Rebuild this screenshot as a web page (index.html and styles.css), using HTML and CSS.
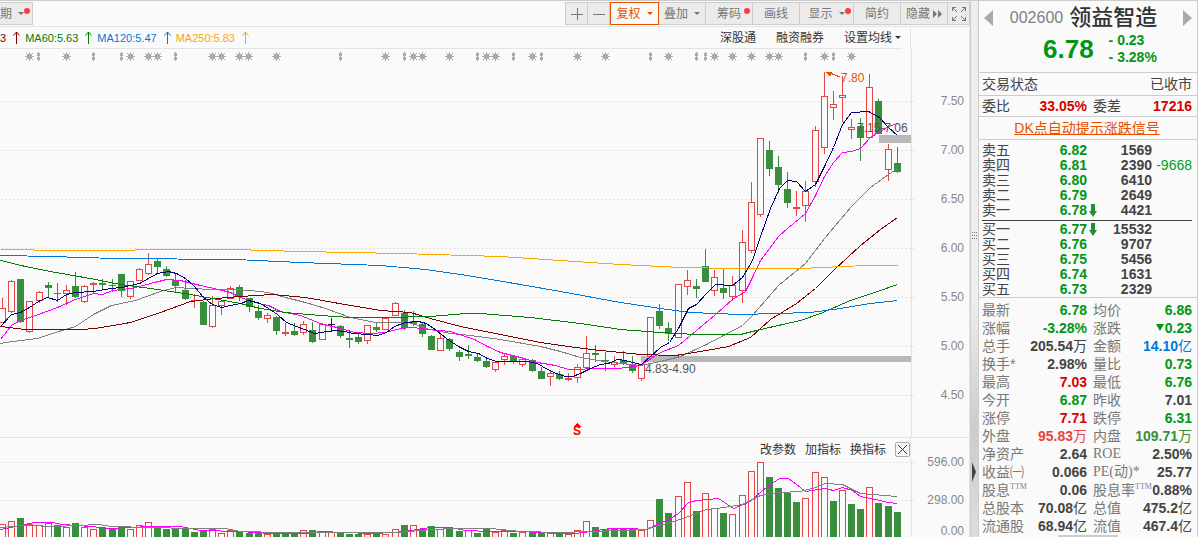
FILE: index.html
```html
<!DOCTYPE html>
<html lang="zh-CN">
<head>
<meta charset="utf-8">
<title>领益智造 002600</title>
<link rel="stylesheet" href="styles.css">
</head>
<body>
<div class="app">
  <main class="main">
    <header class="toolbar">
      <button class="tool tool-period" type="button">期<i class="caret"></i><i class="dot"></i></button>
      <div class="tools">
        <button class="tool tool-icon" type="button" aria-label="放大"><svg width="12" height="12" viewBox="0 0 12 12"><path d="M0 6.5H12M6.5 0V12"/></svg></button>
        <button class="tool tool-icon" type="button" aria-label="缩小"><svg width="12" height="12" viewBox="0 0 12 12"><path d="M0 6.5H12"/></svg></button>
        <button class="tool tool-wide active" type="button">复权<i class="caret"></i></button>
        <button class="tool" type="button">叠加<i class="caret"></i></button>
        <button class="tool" type="button">筹码<i class="dot"></i></button>
        <button class="tool" type="button">画线</button>
        <button class="tool tool-wider" type="button">显示<i class="caret"></i><i class="dot"></i></button>
        <button class="tool" type="button">简约</button>
        <button class="tool" type="button">隐藏<svg class="ffwd" width="9" height="8" viewBox="0 0 9 8"><path d="M0 0L4 4L0 8ZM5 0L9 4L5 8Z"/></svg></button>
        <button class="tool tool-icon" type="button" aria-label="全屏"><svg width="14" height="14" viewBox="0 0 14 14"><path d="M.5 4V.5H4M.5 .5L5 5M10 .5H13.5V4M13.5 .5L9 5M.5 10V13.5H4M.5 13.5L5 9M10 13.5H13.5V10M13.5 13.5L9 9"/></svg></button>
      </div>
    </header>
    <div class="row-with-axis">
      <div class="ma-row">
        <span class="ma ma30">3<svg class="up" width="7" height="13" viewBox="0 0 7 13"><path d="M3.5 13V1M.5 4.5L3.5 1L6.5 4.5"/></svg></span>
        <span class="ma ma60">MA60:5.63<svg class="up" width="7" height="13" viewBox="0 0 7 13"><path d="M3.5 13V1M.5 4.5L3.5 1L6.5 4.5"/></svg></span>
        <span class="ma ma120">MA120:5.47<svg class="up" width="7" height="13" viewBox="0 0 7 13"><path d="M3.5 13V1M.5 4.5L3.5 1L6.5 4.5"/></svg></span>
        <span class="ma ma250">MA250:5.83<svg class="up" width="7" height="13" viewBox="0 0 7 13"><path d="M3.5 13V1M.5 4.5L3.5 1L6.5 4.5"/></svg></span>
        <div class="chart-links">
          <button class="plain" type="button">深股通</button>
          <button class="plain" type="button">融资融券</button>
          <button class="plain" type="button">设置均线<i class="caret"></i></button>
        </div>
      </div>
    </div>
    <svg class="chart" id="price" viewBox="0 48 970 389"></svg>
    <div class="row-with-axis volume-head">
      <div class="volume-row">
        <button class="plain" type="button">改参数</button>
        <button class="plain" type="button">加指标</button>
        <button class="plain" type="button">换指标</button>
        <button class="close" type="button" aria-label="关闭"><svg width="9" height="9" viewBox="0 0 9 9"><path d="M0 0L9 9M9 0L0 9"/></svg></button>
      </div>
    </div>
    <svg class="chart" id="volume" viewBox="0 460 970 77"></svg>
  </main>

  <div class="splitter">
    <svg class="grip" width="6" height="10" viewBox="0 0 6 10"><path d="M0 1.500H6M0 4.500H6M0 7.500H6" stroke-dasharray="1 1"/></svg>
    <svg class="fold" width="4" height="20" viewBox="0 0 4 20"><path d="M0 0L4 10L0 20Z"/></svg>
  </div>

  <aside class="side">
    <section class="quote">
      <div class="name-row">
        <button class="nav" type="button" aria-label="上一只"><svg width="9" height="16" viewBox="0 0 9 16"><path d="M9 0L0 8L9 16Z"/></svg></button>
        <h1 class="stock"><span class="code">002600</span>领益智造</h1>
        <button class="nav" type="button" aria-label="下一只"><svg width="9" height="16" viewBox="0 0 9 16"><path d="M0 0L9 8L0 16Z"/></svg></button>
      </div>
      <div class="price-row">
        <strong class="price">6.78</strong>
        <div class="change"><span>- 0.23</span><span>- 3.28%</span></div>
      </div>
    </section>
    <section class="line state"><span>交易状态</span><span>已收市</span></section>
    <section class="line ratio">
      <span>委比</span><b class="red">33.05%</b><span class="second">委差</span><b class="red">17216</b>
    </section>
    <section class="line dk"><a href="#dk">DK点自动提示涨跌信号</a></section>
    <section class="book">
      <table class="orders">
        <colgroup><col class="o-name"><col class="o-price"><col class="o-arrow"><col class="o-vol"><col></colgroup>
        <tbody>
          <tr><th>卖五</th><td class="green">6.82</td><td></td><td>1569</td><td></td></tr>
          <tr><th>卖四</th><td class="green">6.81</td><td></td><td>2390</td><td class="delta">-9668</td></tr>
          <tr><th>卖三</th><td class="green">6.80</td><td></td><td>6410</td><td></td></tr>
          <tr><th>卖二</th><td class="green">6.79</td><td></td><td>2649</td><td></td></tr>
          <tr><th>卖一</th><td class="green">6.78</td><td><svg class="drop" width="8" height="13" viewBox="0 0 8 13"><path d="M2 0H6V7H8L4 13L0 7H2Z"/></svg></td><td>4421</td><td></td></tr>
        </tbody>
      </table>
      <table class="orders buy">
        <colgroup><col class="o-name"><col class="o-price"><col class="o-arrow"><col class="o-vol"><col></colgroup>
        <tbody>
          <tr><th>买一</th><td class="green">6.77</td><td><svg class="drop" width="8" height="13" viewBox="0 0 8 13"><path d="M2 0H6V7H8L4 13L0 7H2Z"/></svg></td><td>15532</td><td></td></tr>
          <tr><th>买二</th><td class="green">6.76</td><td></td><td>9707</td><td></td></tr>
          <tr><th>买三</th><td class="green">6.75</td><td></td><td>5456</td><td></td></tr>
          <tr><th>买四</th><td class="green">6.74</td><td></td><td>1631</td><td></td></tr>
          <tr><th>买五</th><td class="green">6.73</td><td></td><td>2329</td><td></td></tr>
        </tbody>
      </table>
    </section>
    <section class="figures">
      <table class="stats">
        <colgroup><col class="s-name"><col class="s-value"><col class="s-name2"><col></colgroup>
        <tbody>
          <tr><th>最新</th><td class="green">6.78</td><th>均价</th><td class="green">6.86</td></tr>
          <tr><th>涨幅</th><td class="green">-3.28%</td><th>涨跌</th><td class="green"><i class="fall"></i>0.23</td></tr>
          <tr><th>总手</th><td>205.54<span>万</span></td><th>金额</th><td class="blue">14.10<span>亿</span></td></tr>
          <tr><th>换手*</th><td>2.98%</td><th>量比</th><td class="green">0.73</td></tr>
          <tr><th>最高</th><td class="red">7.03</td><th>最低</th><td class="green">6.76</td></tr>
          <tr><th>今开</th><td class="green">6.87</td><th>昨收</th><td>7.01</td></tr>
          <tr><th>涨停</th><td class="red">7.71</td><th>跌停</th><td class="green">6.31</td></tr>
          <tr><th>外盘</th><td class="soft-red">95.83<span>万</span></td><th>内盘</th><td class="soft-green">109.71<span>万</span></td></tr>
          <tr><th>净资产</th><td>2.64</th><th class="latin">ROE</th><td>2.50%</td></tr>
          <tr><th>收益㈠</th><td>0.066</td><th class="latin">PE(动)*</th><td>25.77</td></tr>
          <tr><th>股息<sup>TTM</sup></th><td>0.06</td><th>股息率<sup>TTM</sup></th><td>0.88%</td></tr>
          <tr><th>总股本</th><td>70.08<span>亿</span></td><th>总值</th><td>475.2<span>亿</span></td></tr>
          <tr><th>流通股</th><td>68.94<span>亿</span></td><th>流值</th><td>467.4<span>亿</span></td></tr>
        </tbody>
      </table>
    </section>
    <div class="scroll-hint"></div>
  </aside>
</div>
<script src="chart.js"></script>
</body>
</html>
```
FILE: styles.css
```css
* { box-sizing: border-box; }
body {
  margin: 0;
  background: #fafafa;
  color: #444;
  font: 12px/16px "Liberation Sans", "Noto Sans CJK SC", sans-serif;
  overflow: hidden;
}
button {
  font: inherit;
  color: inherit;
  border: 0;
  padding: 0;
  background: none;
  white-space: nowrap;
}
svg { display: block; }
path { fill: none; stroke: currentColor; }
.app { display: flex; height: 100vh; border-top: 1px solid #ccc; }
.main { flex: 1; min-width: 0; }

.toolbar {
  display: flex;
  justify-content: space-between;
  height: 26px;
  padding: 1px 0 1px;
  border-bottom: 1px solid #e4e4e4;
  color: #777;
}
.tools { display: flex; border-left: 1px solid #ccc; }
.tool {
  position: relative;
  display: flex;
  align-items: center;
  justify-content: center;
  width: 47px;
  height: 23px;
  background: #ebebeb;
  border: 1px solid #ccc;
  border-left: 0;
}
.tool-icon { width: 22px; }
.tool-wide { width: 49px; }
.tool-wider { width: 54px; }
.tool-period { width: 33px; justify-content: flex-start; padding-right: 10px; }
.tool.active {
  color: #e65000;
  background: #fafafa;
  border: 1px solid #e65000;
}
.caret {
  margin-left: 6px;
  border: 3px solid transparent;
  border-top-color: currentColor;
  border-bottom: 0;
}
.dot {
  position: absolute;
  top: 5px;
  right: 2px;
  width: 6px;
  height: 6px;
  border-radius: 50%;
  background: #ff3c3c;
}
.ffwd { margin-left: 3px; }
.ffwd path { fill: currentColor; stroke: none; }

.row-with-axis { padding-right: 58px; border-right: 1px solid #e4e4e4; }
.ma-row {
  display: flex;
  align-items: center;
  gap: 5px;
  height: 21px;
  padding-right: 9px;
  border-right: 1px solid #e4e4e4;
}
.ma { display: flex; align-items: center; gap: 7px; font-size: 11px; }
.ma30 { color: #800000; }
.ma60 { color: #008000; }
.ma120 { color: #0078d7; }
.ma250 { color: #ffa500; }
.chart-links { display: flex; gap: 20px; margin-left: auto; color: #333; }
.plain { display: flex; align-items: center; }
.plain .caret { margin-left: 3px; }
.volume-head { border-top: 1px solid #e4e4e4; }
.volume-row {
  display: flex;
  align-items: center;
  justify-content: flex-end;
  gap: 9px;
  height: 23px;
  border-right: 1px solid #e4e4e4;
  color: #333;
}
.close {
  display: flex;
  align-items: center;
  justify-content: center;
  width: 15px;
  height: 15px;
  border: 1px solid #aaa;
  border-radius: 2px;
}

.chart { width: 100%; height: auto; overflow: visible; shape-rendering: crispEdges; }
.chart text { font-size: 12px; fill: #555; }
.chart .axis { fill: #888; text-anchor: end; }
.chart .peak { fill: #e65000; }
.chart .signal { fill: #f00; font-weight: bold; text-anchor: middle; }
.chart .frame { stroke: #e4e4e4; }
.chart .grid { stroke: #ccc; stroke-dasharray: 1 3; }
.chart .gap { fill: #b8b8b8; }
.chart .up { stroke: #e54545; fill: #fafafa; }
.chart .down { stroke: #388e3c; fill: #388e3c; }
.chart .flat { stroke: #222; fill: #222; }
.chart .mark { stroke: #aaa; fill: #aaa; }
.chart .curve { fill: none; }
.chart .navy { stroke: #000080; }
.chart .magenta { stroke: #f0f; }
.chart .gray { stroke: #808080; }
.chart .maroon { stroke: #800000; }
.chart .forest { stroke: #008000; }
.chart .azure { stroke: #0078d7; }
.chart .amber { stroke: #ffa500; }
.chart .pointer { stroke: #e65000; fill: #e65000; }
.chart .tip { fill: #f00; stroke: none; }

.splitter {
  display: flex;
  flex-direction: column;
  justify-content: space-between;
  width: 8px;
  padding: 230px 1px 55px;
  border-left: 1px solid #ccc;
  background: linear-gradient(#eee 55%, #ccc 80%, #ddd);
}
.grip { color: #777; }
.fold path { fill: #444; stroke: none; }

.side {
  display: flex;
  flex-direction: column;
  width: 220px;
  border: 1px solid #ccc;
  border-top: 0;
  border-bottom: 0;
  font-size: 14px;
}
.quote { height: 72px; padding: 3px 5px 0; }
.name-row { display: flex; align-items: center; justify-content: space-between; height: 28px; }
.nav path { fill: #aaa; stroke: none; }
.stock { display: flex; align-items: center; gap: 6px; margin: 0; padding-right: 9px; font-size: 22px; line-height: 28px; font-weight: 500; color: #333; }
.code { font-size: 16px; font-weight: normal; color: #808080; }
.price-row { display: flex; align-items: center; gap: 15px; padding-left: 59px; color: #009614; }
.price { font-size: 26px; line-height: 34px; }
.change { display: flex; flex-direction: column; font-weight: bold; line-height: 17px; white-space: pre; }
.line {
  display: flex;
  align-items: center;
  height: 23px;
  padding: 0 5px 0 3px;
  border-top: 1px solid #ccc;
}
.state { justify-content: space-between; }
.ratio { display: grid; grid-template-columns: 28px 77px 34px 1fr; height: 22px; }
.ratio b { text-align: right; }
.ratio .second { padding-left: 6px; }
.dk { justify-content: center; }
.dk a { color: #e65000; }
.book { padding: 3px 5px 0 3px; border-top: 1px solid #ccc; }
table { width: 100%; table-layout: fixed; border-collapse: collapse; white-space: nowrap; }
th, td { padding: 0; font-weight: bold; text-align: right; }
th { font-weight: normal; text-align: left; }
.orders td, .orders th { height: 15px; line-height: 15px; }
.buy { border-top: 1px solid #444; margin-top: 2px; border-collapse: separate; border-spacing: 0; padding-top: 1px; }
.o-name { width: 30px; }
.o-price { width: 75px; }
.o-arrow { width: 10px; }
.o-vol { width: 55px; }
.drop { margin-left: 2px; }
.drop path { fill: #229032; stroke: none; }
.orders .delta { font-weight: normal; color: #00a020; }
.figures { padding: 3px 5px 0 3px; border-top: 1px solid #ccc; }
.stats td, .stats th { height: 18px; line-height: 18px; }
.stats th { color: #777; }
.stats td span { font-weight: normal; }
.s-name { width: 38px; }
.s-value { width: 67px; }
.s-name2 { width: 42px; }
.stats td + th { padding-left: 6px; }
.stats sup { font: 8px/8px "Liberation Serif", serif; color: #7488a0; vertical-align: 6px; }
.stats .latin { font-family: "Liberation Serif", "Noto Sans CJK SC", serif; }
.fall {
  display: inline-block;
  margin-right: 1px;
  vertical-align: 2px;
  border: 4px solid transparent;
  border-top: 7px solid #009614;
  border-bottom: 0;
}
.green { color: #009614; }
.red { color: #d60000; }
.blue { color: #0078d7; }
.soft-red { color: #e54545; }
.soft-green { color: #388e3c; }
.scroll-hint { align-self: center; width: 60px; height: 2px; background: #ccc; }
```
FILE: chart.js
```js
// One entry per day: direction, high, body top, body bottom, low.
const days = `r298,308,323,323 r280,281,312,313 g279,279,322,323 r301,301,332,333 r291,292,301,303 g282,285,288,297 g283,293,294,302
r285,290,294,305 g272,286,297,298 r285,286,302,303 r282,283,285,293 g279,283,285,290 g279,285,286,292 g274,274,291,297
r281,281,297,299 r268,269,281,281 r253,264,274,275 g259,261,267,274 g266,269,276,277 g273,280,286,292 g280,290,299,300
r294,300,301,308 g301,302,325,325 r296,305,327,328 r300,301,306,315 r286,288,299,299 g285,287,297,301 g298,298,307,312
g305,311,318,320 r313,315,319,323 g316,317,331,335 r323,332,334,336 g323,331,335,336 r321,324,333,335 g322,330,342,343
r324,324,340,340 k318,324,325,332 g325,326,336,338 g330,338,340,348 g333,337,342,344 r325,325,341,344 g323,327,330,332
r318,318,330,330 r302,303,316,316 g310,313,328,330 g311,321,324,326 g322,324,334,337 g335,336,350,350 r334,338,351,351
g338,339,349,351 g350,352,357,361 g345,354,356,359 g354,357,361,362 g359,361,367,368 r361,362,370,372 r353,356,360,365
g355,356,362,364 r357,359,365,367 g359,360,371,372 g367,371,379,379 r371,373,377,386 g371,374,379,380 r373,378,380,381
r364,367,378,383 r336,353,368,368 g345,353,355,362 g352,360,361,371 r356,362,365,367 g351,360,364,365 g356,364,371,373
r364,364,379,381 r317,317,357,357 g304,311,326,329 g322,328,334,341 r284,284,338,338 r270,280,287,295 g279,286,289,298
g249,266,282,282 r270,277,291,296 g268,288,293,299 r276,285,297,301 r230,242,291,303 r182,202,251,253 r138,138,215,217
g141,150,169,176 g156,167,185,193 g172,189,203,208 r191,207,209,216 r181,191,206,222 r126,130,182,187 r72,96,148,154
r91,104,108,120 r76,95,98,122 r119,127,130,139 g118,126,138,161 r74,87,138,138 g99,101,134,134 r144,149,170,181 g147,163,172,173`.split(/\s+/);

const volumes = `r523 r520 g517 r523 r524 r522 g524 r526 g522 r526 r528 g527 g528 g526 r528 r524 r521 g525 g528 g528 g528 g531 g529 r528
r532 r529 g530 g532 g531 r533 g532 g532 g532 r529 g529 r530 r531 g531 g533 g533 r533 g532 r533 r528 g524 r524 g528 g525 r528 g527
g530 r529 g532 g528 r531 r529 g532 r531 g530 g532 r532 g533 r533 r529 r520 g526 g528 g528 g527 g528 r529 r519 g498 g512 r495 r481
g510 r492 r507 g512 r513 r494 r470 r461 g476 g487 g492 g501 r497 r471 r476 g500 r489 g503 g508 r486 g502 g505 g511`.split(/\s+/);

const priceCurves = {
  gray: '0,343 12,341 37,338 55,332 75,326 93,314 111,305 135,300 160,291 175,287 210,289 230,289 250,290 268,292 285,297 305,302 325,308 350,317 375,322 410,322 425,328 450,333 470,335 500,339 540,346 560,351 580,357 610,362 640,365 660,361 680,356 706,344 742,325 752,315 778,285 805,263 824,238 851,206 870,187 888,174 897,168',
  magenta: '0,339 11,325 20,320 38,314 57,307 75,299 93,293 102,294 112,290 130,288 139,286 150,283 166,279 180,280 200,285 218,289 230,292 240,297 258,303 268,305 280,311 300,315 320,323 340,328 354,332 370,333 385,332 400,328 412,327 428,329 450,331 462,335 474,339 487,346 500,352 520,357 537,362 555,365 568,369 580,369 590,368 618,368 640,365 660,352 678,345 696,330 715,314 732,299 745,291 752,277 760,260 778,236 787,228 805,213 815,195 824,176 833,162 842,152 851,151 860,148 870,137 880,131 888,126 897,123',
  maroon: '0,326 25,329 80,329 95,328 130,322 160,312 190,301 215,298 240,296 272,294 305,297 350,305 380,310 410,312 430,318 460,326 500,334 540,342 575,347 600,350 640,354 675,355 706,350 728,346 750,337 770,319 796,303 815,288 833,270 860,245 880,229 897,217',
  forest: '0,260 25,266 50,271 95,279 120,284 150,288 190,294 240,303 260,308 285,312 320,315 350,317 385,317 430,316 465,313 480,313 530,317 580,323 620,329 660,332 695,334 740,334 760,329 800,320 820,313 850,300 880,290 897,284',
  azure: '0,255 53,256 80,257 117,258 235,259 300,262 380,265 425,269 460,274 520,284 560,291 620,302 660,308 690,312 740,314 810,312 840,308 870,303 897,300',
  amber: '0,249 33,249 34,250 134,250 135,249 234,249 300,251 400,253 500,256 560,260 620,264 680,267 735,268 800,268 865,265 897,265',
  navy: '0,326 11,314 20,312 29,307 38,301 47,297 57,300 66,294 75,292 93,291 111,288 121,287 139,283 148,278 157,273 168,271 176,273 185,278 194,286 203,297 212,304 221,307 230,305 240,303 248,300 260,303 268,308 277,314 286,322 296,326 304,329 314,333 334,330 345,331 352,333 368,334 377,335 386,332 394,326 405,322 418,321 426,323 436,330 446,338 458,346 468,351 478,353 487,358 496,361 527,361 537,363 547,369 556,373 565,376 572,376 580,373 590,368 600,364 608,363 617,359 625,360 632,362 641,364 650,356 660,347 669,342 678,328 688,308 696,304 706,293 715,284 732,285 742,277 752,260 760,236 770,208 779,188 787,180 796,181 805,191 815,184 824,166 833,147 842,124 851,112 868,111 879,117 888,127 897,135'
};
const volumeCurves = {
  magenta: '0,528 20,524 34,521 52,521 62,523 90,525 110,527 150,525 180,525 200,529 240,530 270,532 308,532 320,530 345,531 370,532 395,531 410,529 430,526 450,526 465,529 490,530 520,530 560,532 575,532 590,530 610,527 630,527 645,528 655,524 670,517 678,512 688,501 696,499 718,497 724,501 733,507 750,500 762,489 770,483 779,477 788,477 796,483 805,490 825,487 833,489 842,486 852,489 860,495 875,498 888,501 897,502',
  gray: '0,526 25,524 55,525 98,523 110,525 150,526 190,527 225,527 240,530 280,531 400,531 430,528 455,527 490,527 520,530 560,531 590,530 620,529 645,528 655,525 670,521 688,515 706,508 724,506 742,503 760,494 779,491 800,490 815,486 825,482 842,483 860,492 897,495'
};
const stars = [29, 66, 130, 148, 157, 212, 221, 239, 248, 276, 385, 413, 422, 449, 486, 495, 532, 577, 605, 668, 714, 732, 751, 769, 778, 824, 851];
const pills = [38, 93, 121, 175, 340, 404, 477, 513, 541, 650, 696, 705, 805, 833];

const centre = i => Math.floor(2.5 + 9.13 * i);
const kind = { r: 'up', g: 'down', k: 'flat' };
const line = (cls, x1, y1, x2, y2) => `<line class="${cls}" x1="${x1}" y1="${y1}" x2="${x2}" y2="${y2}"/>`;
const rect = (cls, x, y, w, h) => `<rect class="${cls}" x="${x}" y="${y}" width="${w}" height="${h}"/>`;
const text = (cls, x, y, s) => `<text class="${cls}" x="${x}" y="${y}">${s}</text>`;
const curves = set => Object.entries(set).map(([c, p]) => `<polyline class="curve ${c}" transform="translate(0.5 0.5)" points="${p}"/>`).join('');
const axis = rows => rows.map(([y, label, labelY]) =>
  (y ? line('grid', 2, y + 0.5, 911, y + 0.5) + line('frame', 911, y + 0.5, 914, y + 0.5) : '') + text('axis', 964, labelY, label)).join('');
const frame = (top, bottom) => line('frame', 911.5, top, 911.5, bottom) + line('frame', 969.5, top, 969.5, bottom);

function candle(entry, i) {
  const [high, top, bottom, low] = entry.slice(1).split(',').map(Number);
  const x = centre(i);
  const cls = kind[entry[0]];
  return line(cls, x + 0.5, high, x + 0.5, low) +
    rect(cls, x - 2.5, top + 0.5, 6, Math.max(bottom - top - 1, 0.1));
}

let price = frame(48, 437) + line('frame', 0, 48.5, 902, 48.5);
price += axis([[101, '7.50', 105], [150, '7.00', 154], [199, '6.50', 203], [248, '6.00', 252], [297, '5.50', 301], [346, '5.00', 350], [395, '4.50', 399]]);
price += rect('gap', 641, 356, 270, 6) + rect('gap', 879, 135, 32, 8);
stars.forEach(x => {
  price += `<path class="mark" d="M${x - 4} 56.500H${x + 5}M${x + 0.5} 52V61M${x - 3} 53L${x + 4} 60M${x + 4} 53L${x - 3} 60"/>` + rect('mark', x - 1.5, 54.5, 4, 4);
});
pills.forEach(x => {
  price += line('mark', x + 0.5, 52, x + 0.5, 61) + rect('mark', x - 0.5, 53.5, 2, 2) + rect('mark', x - 0.5, 57.5, 2, 2);
});
price += days.map(candle).join('') + curves(priceCurves);
price += text('', 645, 373, '4.83-4.90') + text('', 857, 132, '7.15-7.06') + text('peak', 841, 82, '7.80');
price += '<path class="pointer" d="M826 72L832 72L830 76ZM830 73L840 77"/>';
price += text('signal', 577, 435, 'S') + '<path class="tip" d="M573 427L577 423L581 427Z"/>';
document.getElementById('price').innerHTML = price;

let volume = frame(460, 537);
volume += axis([[461, '596.00', 465], [499, '298.00', 503], [0, '0.00', 534]]);
volume += volumes.map((entry, i) => rect(kind[entry[0]], centre(i) - 2.5, Number(entry.slice(1)) + 0.5, 6, 540 - entry.slice(1))).join('');
volume += curves(volumeCurves);
document.getElementById('volume').innerHTML = volume;
```
